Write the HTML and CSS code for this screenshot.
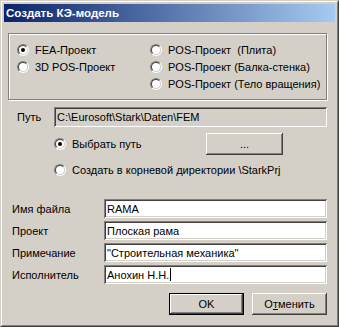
FILE: index.html
```html
<!DOCTYPE html>
<html lang="ru">
<head>
<meta charset="utf-8">
<title>Создать КЭ-модель</title>
<link rel="stylesheet" href="styles.css">
</head>
<body>
<div class="window">
  <div class="frame">
    <div class="titlebar"><span class="title">Создать КЭ-модель</span></div>
    <div class="body">
      <div class="group">
        <div class="opt"><span class="radio checked"></span><span>FEA-Проект</span></div>
        <div class="opt"><span class="radio"></span><span>POS-Проект&nbsp; (Плита)</span></div>
        <div class="opt"><span class="radio"></span><span>3D POS-Проект</span></div>
        <div class="opt"><span class="radio"></span><span>POS-Проект (Балка-стенка)</span></div>
        <div class="opt"></div>
        <div class="opt"><span class="radio"></span><span>POS-Проект (Тело вращения)</span></div>
      </div>

      <div class="path-row">
        <span class="path-label">Путь</span>
        <div class="field readonly">C:\Eurosoft\Stark\Daten\FEM</div>
      </div>

      <div class="choose-row">
        <div class="opt"><span class="radio checked"></span><span>Выбрать путь</span></div>
        <button class="btn browse">...</button>
      </div>

      <div class="root-row">
        <div class="opt"><span class="radio"></span><span>Создать в корневой директории \StarkPrj</span></div>
      </div>

      <div class="form">
        <span class="flabel">Имя файла</span><div class="field">RAMA</div>
        <span class="flabel">Проект</span><div class="field">Плоская рама</div>
        <span class="flabel">Примечание</span><div class="field">"Строительная механика"</div>
        <span class="flabel">Исполнитель</span><div class="field">Анохин Н.Н.<span class="caret"></span></div>
      </div>

      <div class="buttons">
        <button class="btn default">OK</button>
        <button class="btn">О<u>т</u>менить</button>
      </div>
    </div>
  </div>
</div>
</body>
</html>
```

FILE: styles.css
```css
* { box-sizing: border-box; }

html, body {
  margin: 0;
  padding: 0;
  background: #d4d0c8;
}

body {
  font-family: "Liberation Sans", Arial, sans-serif;
  font-size: 11px;
  color: #000;
}

.window {
  width: 339px;
  height: 327px;
  background: #d4d0c8;
  border: 1px solid;
  border-color: #d4d0c8 #404040 #404040 #d4d0c8;
}

.frame {
  height: 100%;
  border: 1px solid;
  border-color: #fff #808080 #808080 #fff;
  padding: 2px;
  display: flex;
  flex-direction: column;
}

.titlebar {
  height: 18px;
  background: linear-gradient(to right, #0a246a, #a6caf0);
  display: flex;
  align-items: center;
  padding-left: 2px;
}

.title {
  color: #fff;
  font-weight: bold;
  font-size: 11.5px;
  font-family: "Liberation Sans", Arial, sans-serif;
}

.body {
  display: flex;
  flex-direction: column;
}

.group {
  margin-top: 11px;
  margin-left: 4px;
  width: 319px;
  height: 67px;
  border: 1px solid #808080;
  box-shadow: inset 1px 1px 0 #fff, 1px 1px 0 #fff;
  padding: 7px 0 0 8px;
  display: grid;
  grid-template-columns: 133px 1fr;
  grid-auto-rows: 17px;
}

.opt {
  display: flex;
  align-items: center;
  gap: 6px;
  height: 17px;
  white-space: nowrap;
}

.radio {
  position: relative;
  flex: none;
  width: 12px;
  height: 12px;
  border-radius: 50%;
  border: 1px solid;
  border-color: #808080 #fff #fff #808080;
}

.radio::before {
  content: "";
  position: absolute;
  inset: 0;
  border-radius: 50%;
  border: 1px solid;
  border-color: #404040 #d4d0c8 #d4d0c8 #404040;
  background: #fff;
}

.radio.checked::after {
  content: "";
  position: absolute;
  left: 3px;
  top: 3px;
  width: 4px;
  height: 4px;
  border-radius: 50%;
  background: #000;
}

.path-row {
  margin-top: 7px;
  display: flex;
  align-items: center;
  height: 20px;
}

.path-label {
  width: 50px;
  padding-left: 13px;
}

.field {
  height: 19px;
  background: #fff;
  box-shadow: inset 1px 1px 0 #808080, inset -1px -1px 0 #fff,
              inset 2px 2px 0 #404040, inset -2px -2px 0 #d4d0c8;
  padding: 0 3px;
  display: flex;
  align-items: center;
  white-space: nowrap;
  overflow: hidden;
}

.path-row .field {
  width: 273px;
  height: 20px;
}

.field.readonly {
  background: #d4d0c8;
}

.choose-row {
  margin-top: 6px;
  height: 22px;
  display: flex;
  align-items: center;
  padding-left: 50px;
}

.choose-row .opt {
  width: 152px;
}

.btn {
  font: inherit;
  color: #000;
  background: #d4d0c8;
  border: none;
  padding: 0;
  width: 75px;
  height: 22px;
  box-shadow: inset -1px -1px 0 #404040, inset 1px 1px 0 #fff,
              inset -2px -2px 0 #808080, inset 2px 2px 0 #d4d0c8;
}

.btn.browse {
  width: 77px;
}

.btn.default {
  border: 1px solid #000;
  box-shadow: inset -1px -1px 0 #404040, inset 1px 1px 0 #fff,
              inset -2px -2px 0 #808080;
}

.btn u {
  text-decoration: underline;
}

.root-row {
  margin-top: 6px;
  padding-left: 50px;
}

.form {
  margin-top: 21px;
  display: grid;
  grid-template-columns: 100px 223px;
  grid-auto-rows: 19px;
  row-gap: 3px;
  align-items: center;
}

.flabel {
  padding-left: 8px;
}

.caret {
  display: inline-block;
  width: 1px;
  height: 13px;
  background: #000;
  margin-left: 1px;
}

.buttons {
  margin-top: 9px;
  display: flex;
  justify-content: flex-end;
  gap: 8px;
  padding-right: 4px;
  width: 327px;
}
```
